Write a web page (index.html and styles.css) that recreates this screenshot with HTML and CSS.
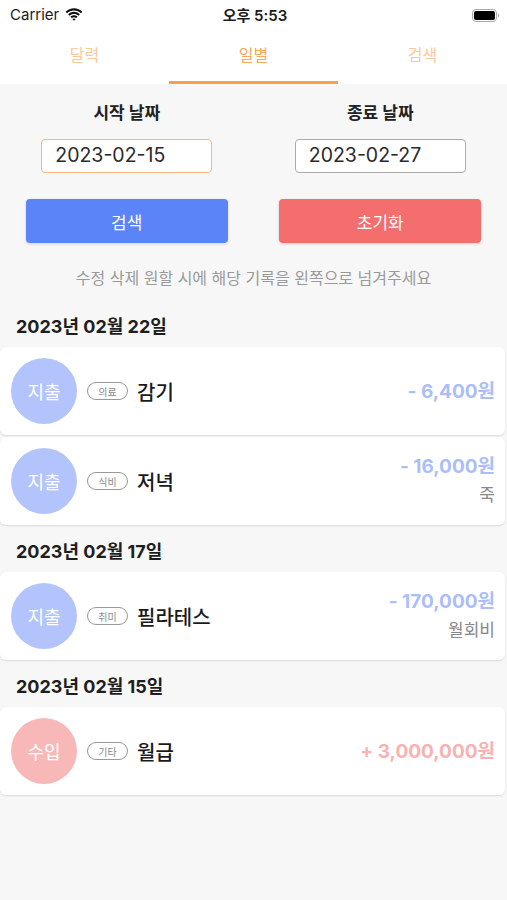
FILE: index.html
```html
<!DOCTYPE html>
<html lang="ko">
<head>
	<meta charset="UTF-8">
	<title>일별</title>
	<link rel="stylesheet" href="styles.css">
</head>
<body>
	<div class="status">
		<div class="status__left">
			<span>Carrier</span>
			<svg class="status__wifi" width="18" height="13" viewBox="0 0 17 12">
				<path d="M8.5 2.2c2.5 0 4.8 1 6.5 2.6l1.4-1.5C14.3 1.3 11.5 0.1 8.5 0.1S2.7 1.3 0.6 3.3L2 4.8c1.7-1.6 4-2.6 6.5-2.6z" fill="#111"/>
				<path d="M8.5 5.5c1.6 0 3.1 0.6 4.2 1.7l1.4-1.5C12.6 4.3 10.6 3.4 8.5 3.4S4.4 4.3 2.9 5.7l1.4 1.5C5.4 6.1 6.9 5.5 8.5 5.5z" fill="#111"/>
				<path d="M8.5 8.7c0.8 0 1.5 0.3 2 0.8l1.4-1.5C11 7.1 9.8 6.6 8.5 6.6S6 7.1 5.1 8l1.4 1.5C7 9 7.7 8.7 8.5 8.7z M8.5 12l1.6-1.7c-0.4-0.4-1-0.6-1.6-0.6s-1.2 0.2-1.6 0.6z" fill="#111"/>
			</svg>
		</div>
		<div class="status__time">오후 5:53</div>
		<div class="status__right">
			<svg width="28" height="13" viewBox="0 0 28 13">
				<rect x="0.5" y="0.5" width="24" height="12" rx="3.5" fill="none" stroke="#aaa"/>
				<rect x="2" y="2" width="21" height="9" rx="2" fill="#000"/>
				<path d="M26 4.5v4c0.8-0.3 1.3-1.1 1.3-2s-0.5-1.7-1.3-2z" fill="#aaa"/>
			</svg>
		</div>
	</div>

	<div class="tabs">
		<div class="tabs__item">달력</div>
		<div class="tabs__item tabs__item--active">일별</div>
		<div class="tabs__item">검색</div>
	</div>

	<div class="page">
		<div class="filter">
			<div class="filter__col">
				<div class="filter__label">시작 날짜</div>
				<div class="filter__input filter__input--focus">2023-02-15</div>
				<button class="filter__btn filter__btn--search">검색</button>
			</div>
			<div class="filter__col">
				<div class="filter__label">종료 날짜</div>
				<div class="filter__input">2023-02-27</div>
				<button class="filter__btn filter__btn--reset">초기화</button>
			</div>
		</div>
		<p class="hint">수정 삭제 원할 시에 해당 기록을 왼쪽으로 넘겨주세요</p>

		<div class="day">2023년 02월 22일</div>
		<div class="row">
			<div class="row__badge row__badge--out">지출</div>
			<span class="row__chip">의료</span>
			<span class="row__title">감기</span>
			<div class="row__right">
				<div class="row__amount row__amount--out">- 6,400원</div>
			</div>
		</div>
		<div class="row">
			<div class="row__badge row__badge--out">지출</div>
			<span class="row__chip">식비</span>
			<span class="row__title">저녁</span>
			<div class="row__right">
				<div class="row__amount row__amount--out">- 16,000원</div>
				<div class="row__memo">죽</div>
			</div>
		</div>

		<div class="day">2023년 02월 17일</div>
		<div class="row">
			<div class="row__badge row__badge--out">지출</div>
			<span class="row__chip">취미</span>
			<span class="row__title">필라테스</span>
			<div class="row__right">
				<div class="row__amount row__amount--out">- 170,000원</div>
				<div class="row__memo">월회비</div>
			</div>
		</div>

		<div class="day">2023년 02월 15일</div>
		<div class="row">
			<div class="row__badge row__badge--in">수입</div>
			<span class="row__chip">기타</span>
			<span class="row__title">월급</span>
			<div class="row__right">
				<div class="row__amount row__amount--in">+ 3,000,000원</div>
			</div>
		</div>
	</div>
</body>
</html>
```

FILE: styles.css
```css
* {
	box-sizing: border-box;
}
body {
	margin: 0;
	background-color: #f7f7f7;
	font-family: Inter, "Noto Sans CJK KR", sans-serif;
	color: #1a1a1a;
}
.status {
	height: 28px;
	display: flex;
	align-items: center;
	justify-content: space-between;
	padding: 0 7px 0 10px;
	background-color: #fff;
	font-size: 15px;
}
.status__left {
	flex: 1;
	display: flex;
	align-items: center;
	gap: 6px;
}
.status__time {
	flex: 1;
	text-align: center;
	font-weight: 600;
}
.status__right {
	flex: 1;
	display: flex;
	justify-content: flex-end;
	padding-top: 2px;
}
.tabs {
	display: flex;
	height: 56px;
	background-color: #fff;
}
.tabs__item {
	flex: 1;
	display: flex;
	align-items: center;
	justify-content: center;
	padding-bottom: 2px;
	font-size: 16px;
	color: #fcc79b;
	border-bottom: 3px solid transparent;
}
.tabs__item--active {
	color: #f6a85e;
	border-bottom-color: #f6a04f;
}
.page {
	padding-top: 17px;
}
.filter {
	display: flex;
}
.filter__col {
	flex: 1;
	display: flex;
	flex-direction: column;
	align-items: center;
}
.filter__label {
	font-size: 17px;
	font-weight: 700;
	line-height: 24px;
	color: #222;
}
.filter__input {
	margin-top: 14px;
	width: 171px;
	height: 34px;
	padding-left: 13px;
	border: 1.5px solid #aaa;
	border-radius: 4px;
	background-color: #fff;
	font-size: 19.5px;
	line-height: 31px;
	color: #2a2a2a;
}
.filter__input--focus {
	border-color: #fbb77a;
}
.filter__btn {
	margin-top: 26px;
	width: 202px;
	height: 44px;
	border: none;
	border-radius: 4px;
	color: #fff;
	font-family: inherit;
	font-size: 17px;
	box-shadow: 0 1px 3px rgba(0, 0, 0, 0.15);
}
.filter__btn--search {
	background-color: #5b84f9;
}
.filter__btn--reset {
	background-color: #f56e6e;
}
.hint {
	margin: 25px 0 14px;
	text-align: center;
	font-size: 16px;
	line-height: 20px;
	color: #9a9a9a;
}
.day {
	height: 45px;
	padding: 1px 0 0 16px;
	display: flex;
	align-items: center;
	font-size: 18px;
	font-weight: 700;
	color: #1e1e1e;
}
.row {
	height: 88px;
	margin: 0 2px 2px 0;
	display: flex;
	align-items: center;
	padding: 0 10px 0 11px;
	background-color: #fff;
	border-radius: 6px;
	box-shadow: 0 1px 2px rgba(0, 0, 0, 0.12);
}
.row__badge {
	width: 66px;
	height: 66px;
	border-radius: 50%;
	display: flex;
	align-items: center;
	justify-content: center;
	color: #fff;
	font-size: 18px;
}
.row__badge--out {
	background-color: #b2c4fb;
}
.row__badge--in {
	background-color: #f8b8b8;
}
.row__chip {
	margin-left: 10px;
	width: 41px;
	height: 18px;
	border: 1px solid #999;
	border-radius: 9px;
	display: flex;
	align-items: center;
	justify-content: center;
	font-size: 10px;
	color: #888;
}
.row__title {
	margin-left: 9px;
	font-size: 20px;
	font-weight: 500;
	color: #1a1a1a;
}
.row__right {
	margin-left: auto;
	display: flex;
	flex-direction: column;
	align-items: flex-end;
}
.row__amount {
	font-size: 19px;
	font-weight: 700;
	line-height: 29px;
}
.row__amount--out {
	color: #abbefa;
}
.row__amount--in {
	color: #f8b2b2;
}
.row__memo {
	font-size: 17px;
	line-height: 29px;
	color: #888;
}
```
